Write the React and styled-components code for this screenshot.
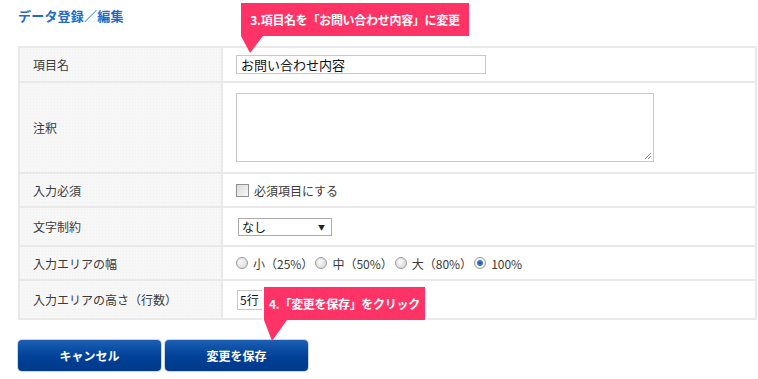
import React from 'react'
import styled, {createGlobalStyle} from 'styled-components'

const GlobalStyle = createGlobalStyle`
  html, body {
    margin: 0;
    padding: 0;
    background: #fff;
  }
  body {
    font-family: "Noto Sans CJK JP", "Liberation Sans", sans-serif;
    color: #333;
  }
`

const rows = [
  {label: '項目名', height: 35, field: 'text'},
  {label: '注釈', height: 91, field: 'textarea'},
  {label: '入力必須', height: 34, field: 'check'},
  {label: '文字制約', height: 39, field: 'select'},
  {label: '入力エリアの幅', height: 34, field: 'radio'},
  {label: '入力エリアの高さ（行数）', height: 39, field: 'lines'},
]

const widths = [
  {label: '小（25%）', checked: false},
  {label: '中（50%）', checked: false},
  {label: '大（80%）', checked: false},
  {label: '100%', checked: true},
]

function Field({type}) {
  if (type === 'text') return <TextInput>お問い合わせ内容</TextInput>
  if (type === 'textarea')
    return (
      <TextArea>
        <Grip width="8" height="8" viewBox="0 0 8 8">
          <path d="M7 1 L1 7 M7 4 L4 7" stroke="#888" strokeWidth="1" />
        </Grip>
      </TextArea>
    )
  if (type === 'check')
    return (
      <Inline>
        <CheckBox />
        <span>必須項目にする</span>
      </Inline>
    )
  if (type === 'select')
    return (
      <Select>
        <span>なし</span>
        <Arrow>▼</Arrow>
      </Select>
    )
  if (type === 'radio')
    return (
      <RadioGroup>
        {widths.map(w => (
          <RadioItem key={w.label}>
            <Radio $checked={w.checked} />
            <span>{w.label}</span>
          </RadioItem>
        ))}
      </RadioGroup>
    )
  return <LineSelect>5行</LineSelect>
}

export default function App() {
  return (
    <Page>
      <GlobalStyle />
      <Title>データ登録／編集</Title>
      <Table>
        {rows.map(r => (
          <React.Fragment key={r.label}>
            <LabelCell style={{height: r.height}}>{r.label}</LabelCell>
            <ValueCell>
              <Field type={r.field} />
            </ValueCell>
          </React.Fragment>
        ))}
      </Table>
      <Buttons>
        <Button>キャンセル</Button>
        <Button>変更を保存</Button>
      </Buttons>

      <Callout $left={241} $top={3} $width={228}>
        3.項目名を「お問い合わせ内容」に変更
        <Tail width="23" height="18" viewBox="0 0 23 18">
          <polygon points="0,0 22,0 9,17" fill="#ff3366" />
        </Tail>
      </Callout>
      <Callout $left={264} $top={287} $width={161} $bordered>
        4.「変更を保存」をクリック
        <Tail width="24" height="22" viewBox="0 0 24 22">
          <polygon points="0,0 23,0 8,21" fill="#ff3366" />
        </Tail>
      </Callout>
    </Page>
  )
}

const Page = styled.div`
  position: relative;
  width: 758px;
  height: 379px;
  padding: 0 1px 0 18px;
  box-sizing: border-box;
  overflow: hidden;
`

const Title = styled.h1`
  margin: 0;
  padding-top: 6px;
  height: 46px;
  box-sizing: border-box;
  font-size: 13px;
  font-weight: bold;
  color: #1f6bc6;
  letter-spacing: 0.2px;
`

const Table = styled.div`
  display: grid;
  grid-template-columns: 203px 1fr;
  border: 2px solid #e9e9e9;
  border-bottom: none;
  font-size: 12px;
`

const LabelCell = styled.div`
  display: flex;
  align-items: center;
  padding-left: 13px;
  box-sizing: border-box;
  background-color: #f7f7f7;
  background-image: radial-gradient(#f1f1f1 0.5px, transparent 0.6px);
  background-size: 3px 3px;
  border-right: 2px solid #e9e9e9;
  border-bottom: 2px solid #e9e9e9;
  color: #3a3a3a;
`

const ValueCell = styled.div`
  display: flex;
  align-items: center;
  padding-left: 13px;
  border-bottom: 2px solid #e9e9e9;
  color: #3a3a3a;
`

const TextInput = styled.div`
  width: 250px;
  height: 19px;
  box-sizing: border-box;
  border: 1px solid #c8c8c8;
  padding: 0 4px;
  font-size: 13px;
  line-height: 17px;
  color: #111;
  background: #fff;
`

const TextArea = styled.div`
  position: relative;
  width: 418px;
  height: 69px;
  box-sizing: border-box;
  border: 1px solid #c8c8c8;
  background: #fff;
`

const Grip = styled.svg`
  position: absolute;
  right: 1px;
  bottom: 1px;
`

const Inline = styled.div`
  display: flex;
  align-items: center;
  gap: 5px;
`

const CheckBox = styled.span`
  width: 11px;
  height: 11px;
  border: 1px solid #8f8f8f;
  background: linear-gradient(135deg, #dcdcdc, #f7f7f7);
`

const Select = styled.div`
  display: flex;
  align-items: center;
  justify-content: space-between;
  width: 94px;
  height: 18px;
  margin-left: 2px;
  box-sizing: border-box;
  border: 1px solid #a9a9a9;
  padding: 0 6px 0 3px;
  font-size: 12px;
  color: #111;
  background: #fff;
`

const Arrow = styled.span`
  font-size: 7px;
  color: #222;
`

const RadioGroup = styled.div`
  display: flex;
  align-items: center;
  gap: 2px;
`

const RadioItem = styled.span`
  display: inline-flex;
  align-items: center;
  gap: 5px;
`

const Radio = styled.span`
  width: 12px;
  height: 12px;
  border-radius: 50%;
  box-sizing: border-box;
  border: 1px solid #9a9a9a;
  background: ${p =>
    p.$checked
      ? 'radial-gradient(circle, #1c4f9e 0, #3d7fd6 2.5px, #f2f2f2 3.5px)'
      : 'radial-gradient(circle at 40% 40%, #fafafa, #d2d2d2)'};
`

const LineSelect = styled.div`
  width: 40px;
  height: 20px;
  box-sizing: border-box;
  border: 1px solid #c8c8c8;
  padding: 0 2px;
  margin-left: 1px;
  font-size: 12px;
  line-height: 18px;
  color: #111;
`

const Buttons = styled.div`
  display: flex;
  gap: 4px;
  margin-top: 20px;
`

const Button = styled.div`
  width: 143px;
  height: 31px;
  display: flex;
  align-items: center;
  justify-content: center;
  border-radius: 4px;
  background: linear-gradient(#1c5fb4, #004098 55%, #003a8a);
  box-shadow: 0 0 0 1px #c9d5e8;
  color: #fff;
  font-size: 12px;
  font-weight: bold;
`

const Callout = styled.div`
  position: absolute;
  left: ${p => p.$left}px;
  top: ${p => p.$top}px;
  width: ${p => p.$width}px;
  height: 33px;
  display: flex;
  align-items: center;
  justify-content: center;
  background: #ff3366;
  color: #fff;
  font-size: 12px;
  font-weight: bold;
  letter-spacing: -0.3px;
  box-sizing: border-box;
  outline: ${p => (p.$bordered ? '2px solid #fff' : 'none')};
`

const Tail = styled.svg`
  position: absolute;
  left: 0;
  top: 33px;
`
